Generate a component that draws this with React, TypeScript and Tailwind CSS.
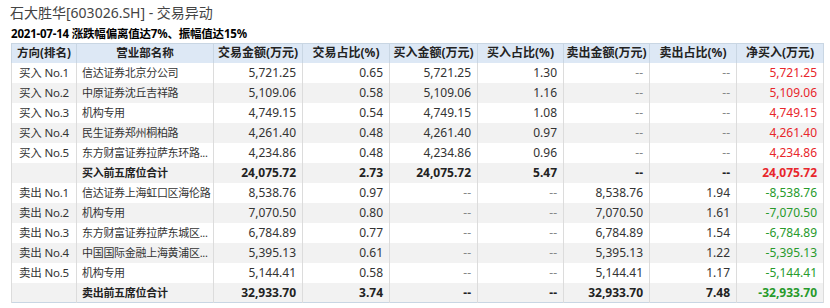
import React from "react";

type Row = {
  rank: string;
  name: string;
  buyAmt: string;
  tradePct: string;
  buy: string;
  buyPct: string;
  sell: string;
  sellPct: string;
  net: string;
  total?: boolean;
  side: "buy" | "sell";
};

const rows: Row[] = [
  { rank: "买入 No.1", name: "信达证券北京分公司", buyAmt: "5,721.25", tradePct: "0.65", buy: "5,721.25", buyPct: "1.30", sell: "--", sellPct: "--", net: "5,721.25", side: "buy" },
  { rank: "买入 No.2", name: "中原证券沈丘吉祥路", buyAmt: "5,109.06", tradePct: "0.58", buy: "5,109.06", buyPct: "1.16", sell: "--", sellPct: "--", net: "5,109.06", side: "buy" },
  { rank: "买入 No.3", name: "机构专用", buyAmt: "4,749.15", tradePct: "0.54", buy: "4,749.15", buyPct: "1.08", sell: "--", sellPct: "--", net: "4,749.15", side: "buy" },
  { rank: "买入 No.4", name: "民生证券郑州桐柏路", buyAmt: "4,261.40", tradePct: "0.48", buy: "4,261.40", buyPct: "0.97", sell: "--", sellPct: "--", net: "4,261.40", side: "buy" },
  { rank: "买入 No.5", name: "东方财富证券拉萨东环路...", buyAmt: "4,234.86", tradePct: "0.48", buy: "4,234.86", buyPct: "0.96", sell: "--", sellPct: "--", net: "4,234.86", side: "buy" },
  { rank: "", name: "买入前五席位合计", buyAmt: "24,075.72", tradePct: "2.73", buy: "24,075.72", buyPct: "5.47", sell: "--", sellPct: "--", net: "24,075.72", side: "buy", total: true },
  { rank: "卖出 No.1", name: "信达证券上海虹口区海伦路", buyAmt: "8,538.76", tradePct: "0.97", buy: "--", buyPct: "--", sell: "8,538.76", sellPct: "1.94", net: "-8,538.76", side: "sell" },
  { rank: "卖出 No.2", name: "机构专用", buyAmt: "7,070.50", tradePct: "0.80", buy: "--", buyPct: "--", sell: "7,070.50", sellPct: "1.61", net: "-7,070.50", side: "sell" },
  { rank: "卖出 No.3", name: "东方财富证券拉萨东城区...", buyAmt: "6,784.89", tradePct: "0.77", buy: "--", buyPct: "--", sell: "6,784.89", sellPct: "1.54", net: "-6,784.89", side: "sell" },
  { rank: "卖出 No.4", name: "中国国际金融上海黄浦区...", buyAmt: "5,395.13", tradePct: "0.61", buy: "--", buyPct: "--", sell: "5,395.13", sellPct: "1.22", net: "-5,395.13", side: "sell" },
  { rank: "卖出 No.5", name: "机构专用", buyAmt: "5,144.41", tradePct: "0.58", buy: "--", buyPct: "--", sell: "5,144.41", sellPct: "1.17", net: "-5,144.41", side: "sell" },
  { rank: "", name: "卖出前五席位合计", buyAmt: "32,933.70", tradePct: "3.74", buy: "--", buyPct: "--", sell: "32,933.70", sellPct: "7.48", net: "-32,933.70", side: "sell", total: true },
];

const headers = [
  "方向(排名)",
  "营业部名称",
  "交易金额(万元)",
  "交易占比(%)",
  "买入金额(万元)",
  "买入占比(%)",
  "卖出金额(万元)",
  "卖出占比(%)",
  "净买入(万元)",
];

const widths = ["w-[65px]", "w-[137px]", "w-[89px]", "w-[87px]", "w-[88px]", "w-[86px]", "w-[86px]", "w-[87px]", "w-[87px]"];

export default function App() {
  return (
    <div
      className="w-[830px] h-[308px] bg-white text-[12px] text-[#333]"
      style={{ fontFamily: '"Noto Sans", "Noto Sans CJK SC", sans-serif' }}
    >
      <div className="pl-[10px] pt-[3px] text-[14px] leading-[20px] text-[#444]">
        石大胜华[603026.SH] - 交易异动
      </div>
      <div className="pl-[11px] pt-[1px] text-[11.5px] leading-[19px] font-bold text-black tracking-[-0.2px]">
        2021-07-14 涨跌幅偏离值达7%、振幅值达15%
      </div>
      <table className="ml-[11px] border-collapse table-fixed w-[812px] border border-[#c9d6e3]">
        <thead>
          <tr className="h-[19px] bg-[#dde8f5]">
            {headers.map((h, i) => (
              <th
                key={h}
                className={`${widths[i]} border-x border-[#c9d6e3] font-bold text-[#222] text-center p-0 leading-[18px] ${i < 2 ? "text-[11.5px]" : ""}`}
              >
                {h}
              </th>
            ))}
          </tr>
        </thead>
        <tbody>
          {rows.map((r, idx) => {
            const bg = idx % 2 === 1 ? "bg-[#f2f2f2]" : "bg-white";
            const netColor = r.side === "buy" ? "text-[#e8262b]" : "text-[#279a2b]";
            const w = r.total ? "font-bold text-[#222]" : "";
            return (
              <tr key={idx} className={`h-[20px] ${bg}`}>
                <td className="border-x border-[#dcdcdc] text-center p-0 leading-[19px] text-[11.5px] tracking-[-0.2px]">{r.rank}</td>
                <td className={`border-x border-[#dcdcdc] text-left pl-[5px] pr-0 whitespace-nowrap leading-[19px] text-[11px] tracking-[-0.3px] ${w}`}>{r.name}</td>
                {[r.buyAmt, r.tradePct, r.buy, r.buyPct, r.sell, r.sellPct].map((v, i) => (
                  <td key={i} className={`border-x border-[#dcdcdc] text-right pr-[6px] leading-[19px] ${w} ${v === "--" && !r.total ? "text-[#888]" : ""}`}>
                    {v}
                  </td>
                ))}
                <td className={`border-x border-[#dcdcdc] text-right pr-[6px] leading-[19px] ${netColor} ${r.total ? "font-bold" : ""}`}>{r.net}</td>
              </tr>
            );
          })}
        </tbody>
      </table>
    </div>
  );
}
